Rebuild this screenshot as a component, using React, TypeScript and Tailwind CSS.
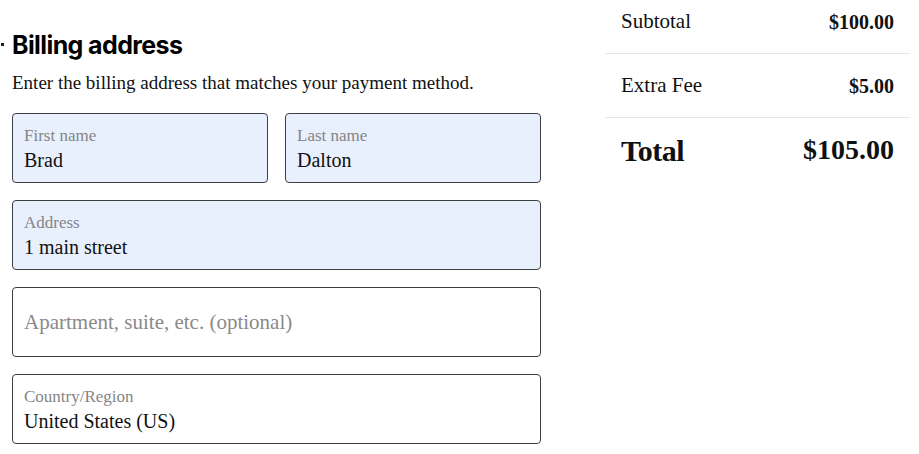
const serif = { fontFamily: '"Liberation Serif", "DejaVu Serif", serif' };

function Field({ label, value, filled = true }: { label: string; value?: string; filled?: boolean }) {
  return (
    <div
      className={`flex h-[70px] flex-col justify-center rounded-[4px] border border-[#3c4043] px-[11px] ${
        filled ? 'bg-[#e8f0fe]' : 'bg-white'
      }`}
    >
      {value ? (
        <>
          <div className="text-[17px] leading-[20px] text-[#858585]">{label}</div>
          <div className="mt-[3px] text-[20px] leading-[22px] text-[#111]">{value}</div>
        </>
      ) : (
        <div className="text-[21px] leading-[22px] text-[#8a8a8a]">{label}</div>
      )}
    </div>
  );
}

function Row({ label, value, total = false }: { label: string; value: string; total?: boolean }) {
  return (
    <div className={`flex items-center justify-between px-[16px] ${total ? 'h-[64px]' : 'h-[64px] border-b border-[#e5e5e5]'}`}>
      <span className={total ? 'text-[30px] font-bold tracking-[-0.5px]' : 'text-[21px]'}>{label}</span>
      <span className={total ? 'text-[28px] font-bold' : 'text-[20px] font-bold'}>{value}</span>
    </div>
  );
}

export default function App() {
  return (
    <div className="flex h-[454px] w-[919px] overflow-hidden bg-white text-[#111]" style={serif}>
      <div className="w-[541px] shrink-0 pl-[12px] pt-[29px]">
        <div className="relative">
          <span className="absolute left-[-11px] top-[14px] h-[3px] w-[3px] bg-[#222]" />
          <h2
            className="text-[25px] font-bold leading-[32px] tracking-[-0.6px] text-black"
            style={{ fontFamily: 'Inter, "Liberation Sans", sans-serif' }}
          >
            Billing address
          </h2>
        </div>
        <p className="mt-[11px] text-[19px] leading-[22px] text-[#111]">
          Enter the billing address that matches your payment method.
        </p>
        <div className="mt-[19px] flex flex-col gap-[17px]">
          <div className="grid grid-cols-2 gap-[17px]">
            <Field label="First name" value="Brad" />
            <Field label="Last name" value="Dalton" />
          </div>
          <Field label="Address" value="1 main street" />
          <Field label="Apartment, suite, etc. (optional)" filled={false} />
          <Field label="Country/Region" value="United States (US)" filled={false} />
        </div>
      </div>
      <div className="ml-[64px] mt-[-11px] w-[305px] shrink-0">
        <div className="h-[1px]" />
        <Row label="Subtotal" value="$100.00" />
        <Row label="Extra Fee" value="$5.00" />
        <Row label="Total" value="$105.00" total />
      </div>
    </div>
  );
}
